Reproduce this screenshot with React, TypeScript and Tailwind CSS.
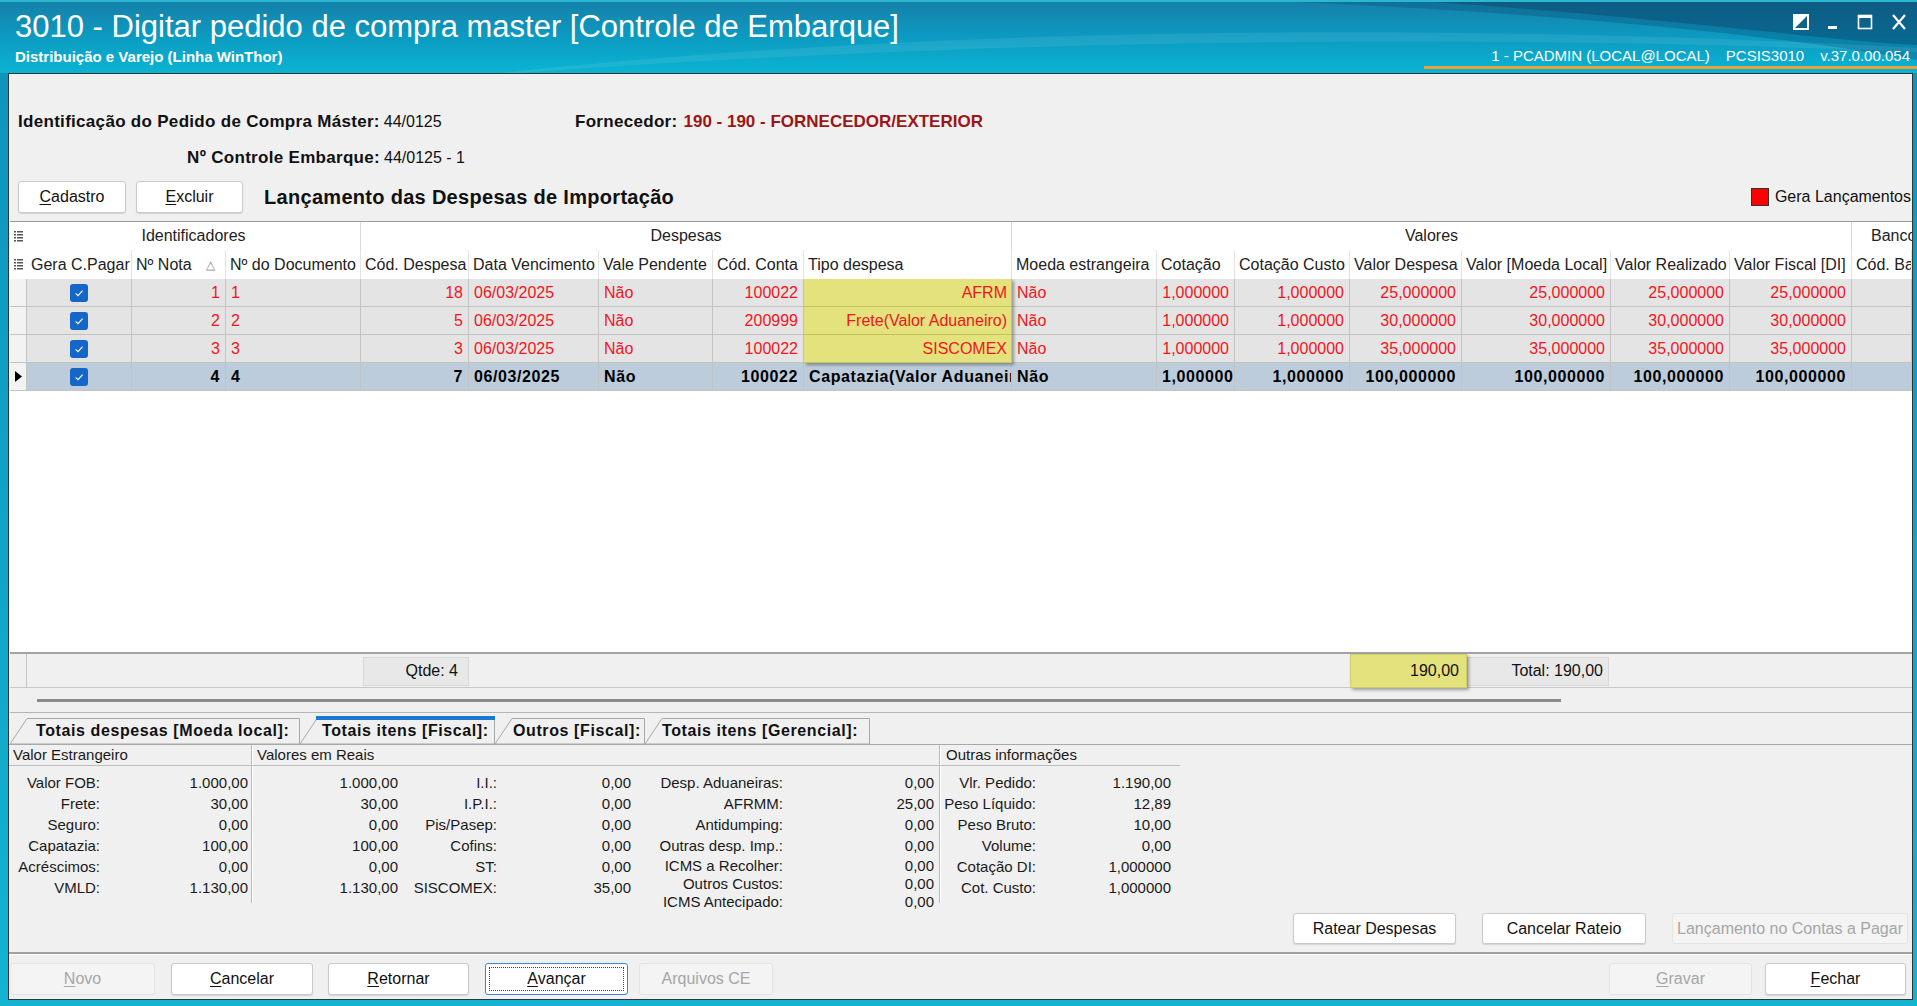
import React from "react";

const FONT = "font-['Liberation_Sans',Arial,sans-serif]";

function Mn({ t }: { t: string }) {
  return (
    <>
      <span className="underline underline-offset-2">{t[0]}</span>
      {t.slice(1)}
    </>
  );
}

type BtnProps = { label: string; w: string; ul?: boolean; disabled?: boolean; focus?: boolean };

function Btn({ label, w, ul, disabled, focus }: BtnProps) {
  const txt = ul ? <Mn t={label} /> : label;
  const look = disabled
    ? "bg-[#f4f4f4] border-[#e3e3e3] text-[#a6a6a6]"
    : focus
    ? "bg-white border-[#3d86d6] text-[#111]"
    : "bg-white border-[#cacaca] text-[#111] shadow-[0_1px_1px_rgba(0,0,0,0.12)]";
  return (
    <button
      type="button"
      className={`h-[32px] shrink-0 rounded-[3px] border text-[16px] flex items-center justify-center ${look} ${w}`}
    >
      {focus ? (
        <span className="flex items-center justify-center w-[calc(100%-6px)] h-[calc(100%-6px)] border border-dotted border-[#444]">
          {txt}
        </span>
      ) : (
        txt
      )}
    </button>
  );
}

const GRID =
  "grid grid-cols-[17px_105px_94px_135px_108px_130px_114px_91px_208px_145px_78px_115px_112px_149px_119px_122px_1fr]";

const headers = [
  "Gera C.Pagar",
  "Nº Nota",
  "Nº do Documento",
  "Cód. Despesa",
  "Data Vencimento",
  "Vale Pendente",
  "Cód. Conta",
  "Tipo despesa",
  "Moeda estrangeira",
  "Cotação",
  "Cotação Custo",
  "Valor Despesa",
  "Valor [Moeda Local]",
  "Valor Realizado",
  "Valor Fiscal [DI]",
  "Cód. Banco",
];

const rows = [
  { n: "1", cod: "18", conta: "100022", tipo: "AFRM", v: "25,000000" },
  { n: "2", cod: "5", conta: "200999", tipo: "Frete(Valor Aduaneiro)", v: "30,000000" },
  { n: "3", cod: "3", conta: "100022", tipo: "SISCOMEX", v: "35,000000" },
  { n: "4", cod: "7", conta: "100022", tipo: "Capatazia(Valor Aduaneiro)", v: "100,000000" },
];

function ColIcon() {
  return (
    <svg width="9" height="13" viewBox="0 0 9 13">
      {[1, 4, 7, 10].map((y) => (
        <g key={y} fill="#555">
          <rect x="0" y={y} width="2" height="1.5" />
          <rect x="3" y={y} width="6" height="1.5" />
        </g>
      ))}
    </svg>
  );
}

function Check() {
  return (
    <span className="w-[18px] h-[18px] rounded-[3px] bg-[#1566c9] flex items-center justify-center">
      <svg width="12" height="12" viewBox="0 0 12 12">
        <path d="M2.6 6.3 L5 8.6 L9.6 3.6" stroke="white" strokeWidth="1.1" fill="none" />
      </svg>
    </span>
  );
}

function DataRow({ r, sel }: { r: (typeof rows)[number]; sel: boolean }) {
  const bg = sel ? "bg-[#bdccdb]" : "bg-[#e4e4e4]";
  const tc = sel ? "text-black font-bold tracking-[0.6px]" : "text-[#f0161e]";
  const c = `h-[28px] border-r border-b border-[#c3c3c3] px-[5px] leading-[27px] overflow-hidden whitespace-nowrap ${bg} ${tc}`;
  const yellow =
    "h-[28px] border-r border-b border-[#c9c660] px-[4px] leading-[27px] overflow-hidden whitespace-nowrap bg-[#e4e27c] text-[#f0161e] text-right relative z-10 shadow-[2px_2px_3px_rgba(0,0,0,0.35)]";
  return (
    <div className={`${GRID} text-[16px]`}>
      <div className="h-[28px] border-r border-b border-[#c3c3c3] bg-[#f3f3f3] flex items-center justify-center">
        {sel && (
          <svg width="7" height="11" viewBox="0 0 7 11">
            <path d="M0 0 L7 5.5 L0 11 Z" fill="#000" />
          </svg>
        )}
      </div>
      <div className={`${c} flex items-center justify-center`}>
        <Check />
      </div>
      <div className={`${c} text-right`}>{r.n}</div>
      <div className={`${c} text-left`}>{r.n}</div>
      <div className={`${c} text-right`}>{r.cod}</div>
      <div className={`${c} text-left`}>06/03/2025</div>
      <div className={`${c} text-left`}>Não</div>
      <div className={`${c} text-right`}>{r.conta}</div>
      {sel ? <div className={`${c} text-left`}>{r.tipo}</div> : <div className={yellow}>{r.tipo}</div>}
      <div className={`${c} text-left`}>Não</div>
      <div className={`${c} text-right`}>1,000000</div>
      <div className={`${c} text-right`}>1,000000</div>
      <div className={`${c} text-right`}>{r.v}</div>
      <div className={`${c} text-right`}>{r.v}</div>
      <div className={`${c} text-right`}>{r.v}</div>
      <div className={`${c} text-right`}>{r.v}</div>
      <div className={c}></div>
    </div>
  );
}

function Tab({ label, w, width, pl, active }: { label: string; w: string; width: number; pl: string; active?: boolean }) {
  return (
    <div className={`relative h-[32px] shrink-0 ${w}`}>
      <svg className="absolute inset-0" width={width} height={32}>
        <polygon
          points={`0,32 17,6.5 ${width - 0.5},6.5 ${width - 0.5},32`}
          fill="#f0f0f0"
          stroke="#a8a8a8"
          strokeWidth="1"
        />
        {active && <rect x="16" y="4" width={width - 16} height="4" fill="#1b78d0" />}
      </svg>
      <div className={`relative h-full flex items-end pb-[1px] text-[16px] font-bold tracking-[0.6px] text-[#111] whitespace-nowrap ${pl}`}>
        {label}
      </div>
    </div>
  );
}

function Pair({ l, v, lw, vw, h = "h-[21px]" }: { l: string; v: string; lw: string; vw: string; h?: string }) {
  return (
    <div className={`flex items-center ${h}`}>
      <div className={`${lw} text-right whitespace-nowrap`}>{l}</div>
      <div className={`${vw} text-right whitespace-nowrap`}>{v}</div>
    </div>
  );
}

function WinIcons() {
  return (
    <div className="flex items-start gap-[18px] pr-[10px] pt-[14px] h-[46px]">
      <svg width="16" height="16" viewBox="0 0 16 16">
        <rect x="1" y="1" width="14" height="14" fill="none" stroke="white" strokeWidth="2" />
        <polygon points="1,15 15,1 1,1" fill="white" />
      </svg>
      <svg width="12" height="16" viewBox="0 0 12 16">
        <rect x="1" y="12" width="9" height="3" fill="white" />
      </svg>
      <svg width="16" height="16" viewBox="0 0 16 16">
        <rect x="1.5" y="1.5" width="13" height="13" fill="none" stroke="white" strokeWidth="1.6" />
        <rect x="1" y="1" width="14" height="3" fill="white" />
      </svg>
      <svg width="16" height="16" viewBox="0 0 16 16">
        <path d="M2 1 L14 15 M14 1 L2 15" stroke="white" strokeWidth="2.2" />
      </svg>
    </div>
  );
}

export default function App() {
  return (
    <div className={`${FONT} w-[1917px] h-[1006px] overflow-hidden flex flex-col bg-gradient-to-b from-[#0f92b9] to-[#12b4d1] text-[#111]`}>
      {/* barra de titulo */}
      <div className="relative h-[73px] shrink-0 bg-gradient-to-b from-[#157fa8] via-[#0c9ac1] to-[#0bb4d2] overflow-hidden">
        <svg className="absolute inset-0" width="1917" height="73" viewBox="0 0 1917 73" preserveAspectRatio="none">
          <path d="M1250 0 C1500 10 1750 30 1917 60 L1917 0 Z" fill="#0a4f78" opacity="0.35" />
          <path d="M1400 0 C1650 15 1820 40 1917 45 L1917 0 Z" fill="#062f55" opacity="0.3" />
          <path d="M500 73 C900 30 1400 20 1917 48 L1917 52 C1400 30 900 45 520 73 Z" fill="#ffffff" opacity="0.08" />
          <rect x="0" y="0" width="1917" height="2" fill="#2bb8cf" />
        </svg>
        <div className="relative flex justify-between h-full">
          <div className="pl-[15px] pt-[7px] text-white">
            <div className="text-[31px] leading-[40px] whitespace-nowrap">
              3010 - Digitar pedido de compra master [Controle de Embarque]
            </div>
            <div className="text-[15px] font-bold leading-[20px] whitespace-nowrap">
              Distribuição e Varejo (Linha WinThor)
            </div>
          </div>
          <div className="w-[493px] h-[69px] flex flex-col items-end border-b-[3px] border-[#e9a23b]">
            <WinIcons />
            <div className="flex gap-[16px] pr-[7px] text-white text-[15px] leading-[20px] whitespace-nowrap">
              <span>1 - PCADMIN (LOCAL@LOCAL)</span>
              <span>PCSIS3010</span>
              <span>v.37.0.00.054</span>
            </div>
          </div>
        </div>
      </div>

      {/* painel principal */}
      <div className="flex-1 ml-[8px] mr-[4px] mb-[6px] border border-[#343434] bg-[#f0f0f0] flex flex-col min-h-0">
        {/* cabecalho */}
        <div className="pt-[37px] pl-[9px] pb-[8px] text-[16px]">
          <div className="flex items-center h-[22px] whitespace-nowrap">
            <div className="w-[557px] flex items-center">
              <span className="font-bold text-[17px] tracking-[0.3px]">Identificação do Pedido de Compra Máster:</span>
              <span className="ml-[4px] text-[16px]">44/0125</span>
            </div>
            <span className="font-bold text-[17px] tracking-[0.3px]">Fornecedor:</span>
            <span className="ml-[6px] font-bold text-[17px] text-[#9b1616]">190 - 190 - FORNECEDOR/EXTERIOR</span>
          </div>
          <div className="flex items-center h-[22px] mt-[14px] whitespace-nowrap">
            <div className="w-[362px] text-right font-bold text-[17px] tracking-[0.3px]">Nº Controle Embarque:</div>
            <span className="ml-[4px] text-[16px]">44/0125 - 1</span>
          </div>
          <div className="flex items-center h-[32px] mt-[12px]">
            <Btn label="Cadastro" w="w-[108px]" ul />
            <div className="w-[10px]" />
            <Btn label="Excluir" w="w-[107px]" ul />
            <div className="ml-[21px] text-[20px] tracking-[0.3px] font-bold whitespace-nowrap">
              Lançamento das Despesas de Importação
            </div>
            <div className="flex-1" />
            <div className="flex items-center mr-[1px]">
              <span className="w-[18px] h-[18px] bg-[#ff0000] border border-[#333]" />
              <span className="ml-[6px] text-[16px] whitespace-nowrap">Gera Lançamentos</span>
            </div>
          </div>
        </div>

        {/* grade */}
        <div className="ml-[1px] border-t border-[#9c9c9c] bg-white flex flex-col">
          <div className={`${GRID} h-[28px] text-[16px] text-[#222]`}>
            <div className="flex items-center justify-center">
              <ColIcon />
            </div>
            <div className="col-span-3 border-r border-[#dadada] flex items-center justify-center">Identificadores</div>
            <div className="col-span-5 border-r border-[#dadada] flex items-center justify-center">Despesas</div>
            <div className="col-span-7 border-r border-[#dadada] flex items-center justify-center">Valores</div>
            <div className="pl-[19px] flex items-center overflow-hidden whitespace-nowrap">Banco</div>
          </div>
          <div className={`${GRID} h-[29px] text-[16px] text-[#222]`}>
            <div className="flex items-center justify-center">
              <ColIcon />
            </div>
            {headers.map((h) => (
              <div
                key={h}
                className="border-r border-[#e3e3e3] px-[4px] flex items-center overflow-hidden whitespace-nowrap"
              >
                {h}
                {h === "Nº Nota" && <span className="ml-[14px] text-[12px] text-[#888]">△</span>}
              </div>
            ))}
          </div>
          {rows.map((r, i) => (
            <DataRow key={r.n} r={r} sel={i === 3} />
          ))}
          <div className="h-[261px] bg-white" />
          <div className={`${GRID} h-[36px] bg-[#f0f0f0] border-t-2 border-[#a3a3a3] border-b border-b-[#c8c8c8] text-[16px] items-center`}>
            <div className="h-full border-r border-[#c3c3c3]" />
            <div />
            <div />
            <div />
            <div className="h-[29px] ml-[2px] bg-[#e8e8e8] border border-[#d9d9d9] flex items-center justify-end pr-[10px]">
              Qtde: 4
            </div>
            <div />
            <div />
            <div />
            <div />
            <div />
            <div />
            <div />
            <div className="h-[34px] w-[117px] bg-[#e4e27c] border border-[#cfcc6a] shadow-[2px_2px_3px_rgba(0,0,0,0.35)] flex items-center justify-end pr-[7px] relative z-10">
              190,00
            </div>
            <div className="h-[29px] ml-[5px] mr-[2px] bg-[#e8e8e8] border border-[#d9d9d9] flex items-center justify-end pr-[5px]">
              Total: 190,00
            </div>
            <div />
            <div />
            <div />
          </div>
          <div className="h-[25px] bg-[#f0f0f0] border-b border-[#b5b5b5] flex items-center">
            <div className="ml-[27px] w-[1524px] h-[3px] bg-[#8a8a8a]" />
          </div>
        </div>

        {/* abas */}
        <div className="h-[32px] shrink-0 flex items-end pl-[1px] border-b border-[#a8a8a8] bg-[#f0f0f0]">
          <Tab label="Totais despesas [Moeda local]:" w="w-[290px]" width={290} pl="pl-[26px]" />
          <Tab label="Totais itens [Fiscal]:" w="w-[195px]" width={195} pl="pl-[22px]" active />
          <Tab label="Outros [Fiscal]:" w="w-[150px]" width={150} pl="pl-[18px]" />
          <Tab label="Totais itens [Gerencial]:" w="w-[225px]" width={225} pl="pl-[17px]" />
        </div>

        {/* totais */}
        <div className="flex-1 flex flex-col text-[15px] text-[#1a1a1a]">
          <div className="h-[158px] flex">
            <div className="w-[243px] border-r border-[#bdbdbd] shadow-[1px_0_0_#fff]">
              <div className="h-[21px] pl-[4px] leading-[20px] border-b border-[#bdbdbd]">Valor Estrangeiro</div>
              <div className="pt-[7px]">
                <Pair l="Valor FOB:" v="1.000,00" lw="w-[91px]" vw="w-[148px]" />
                <Pair l="Frete:" v="30,00" lw="w-[91px]" vw="w-[148px]" />
                <Pair l="Seguro:" v="0,00" lw="w-[91px]" vw="w-[148px]" />
                <Pair l="Capatazia:" v="100,00" lw="w-[91px]" vw="w-[148px]" />
                <Pair l="Acréscimos:" v="0,00" lw="w-[91px]" vw="w-[148px]" />
                <Pair l="VMLD:" v="1.130,00" lw="w-[91px]" vw="w-[148px]" />
              </div>
            </div>
            <div className="w-[688px] border-r border-[#bdbdbd] shadow-[1px_0_0_#fff]">
              <div className="h-[21px] pl-[5px] leading-[20px] border-b border-[#bdbdbd]">Valores em Reais</div>
              <div className="pt-[7px] flex">
                <div>
                  {[
                    ["1.000,00", "I.I.:", "0,00"],
                    ["30,00", "I.P.I.:", "0,00"],
                    ["0,00", "Pis/Pasep:", "0,00"],
                    ["100,00", "Cofins:", "0,00"],
                    ["0,00", "ST:", "0,00"],
                    ["1.130,00", "SISCOMEX:", "35,00"],
                  ].map((a) => (
                    <div key={a[1]} className="flex items-center h-[21px] whitespace-nowrap">
                      <div className="w-[146px] text-right">{a[0]}</div>
                      <div className="w-[99px] text-right">{a[1]}</div>
                      <div className="w-[134px] text-right">{a[2]}</div>
                    </div>
                  ))}
                </div>
                <div>
                  <Pair l="Desp. Aduaneiras:" v="0,00" lw="w-[152px]" vw="w-[151px]" />
                  <Pair l="AFRMM:" v="25,00" lw="w-[152px]" vw="w-[151px]" />
                  <Pair l="Antidumping:" v="0,00" lw="w-[152px]" vw="w-[151px]" />
                  <Pair l="Outras desp. Imp.:" v="0,00" lw="w-[152px]" vw="w-[151px]" />
                  <Pair l="ICMS a Recolher:" v="0,00" lw="w-[152px]" vw="w-[151px]" h="h-[18px]" />
                  <Pair l="Outros Custos:" v="0,00" lw="w-[152px]" vw="w-[151px]" h="h-[18px]" />
                  <Pair l="ICMS Antecipado:" v="0,00" lw="w-[152px]" vw="w-[151px]" h="h-[18px]" />
                </div>
              </div>
            </div>
            <div className="w-[240px]">
              <div className="h-[21px] pl-[6px] leading-[20px] border-b border-[#bdbdbd]">Outras informações</div>
              <div className="pt-[7px]">
                <Pair l="Vlr. Pedido:" v="1.190,00" lw="w-[96px]" vw="w-[135px]" />
                <Pair l="Peso Líquido:" v="12,89" lw="w-[96px]" vw="w-[135px]" />
                <Pair l="Peso Bruto:" v="10,00" lw="w-[96px]" vw="w-[135px]" />
                <Pair l="Volume:" v="0,00" lw="w-[96px]" vw="w-[135px]" />
                <Pair l="Cotação DI:" v="1,000000" lw="w-[96px]" vw="w-[135px]" />
                <Pair l="Cot. Custo:" v="1,000000" lw="w-[96px]" vw="w-[135px]" />
              </div>
            </div>
          </div>
          <div className="mt-[10px] h-[31px] flex justify-end gap-[26px] pr-[4px]">
            <Btn label="Ratear Despesas" w="w-[163px] !h-[31px]" />
            <Btn label="Cancelar Rateio" w="w-[164px] !h-[31px]" />
            <Btn label="Lançamento no Contas a Pagar" w="w-[236px] !h-[31px]" disabled />
          </div>
        </div>

        {/* barra inferior */}
        <div className="h-[8px]" />
        <div className="h-[2px] bg-[#a2a2a2]" />
        <div className="h-[1px] bg-white" />
        <div className="h-[44px] flex items-center pt-[8px] pb-[4px] pl-[1px] pr-[6px]">
          <Btn label="Novo" w="w-[145px]" ul disabled />
          <div className="w-[16px]" />
          <Btn label="Cancelar" w="w-[142px]" ul />
          <div className="w-[15px]" />
          <Btn label="Retornar" w="w-[141px]" ul />
          <div className="w-[16px]" />
          <Btn label="Avançar" w="w-[143px]" ul focus />
          <div className="w-[11px]" />
          <Btn label="Arquivos CE" w="w-[134px]" disabled />
          <div className="flex-1" />
          <Btn label="Gravar" w="w-[143px]" ul disabled />
          <div className="w-[13px]" />
          <Btn label="Fechar" w="w-[141px]" ul />
        </div>
      </div>
    </div>
  );
}
